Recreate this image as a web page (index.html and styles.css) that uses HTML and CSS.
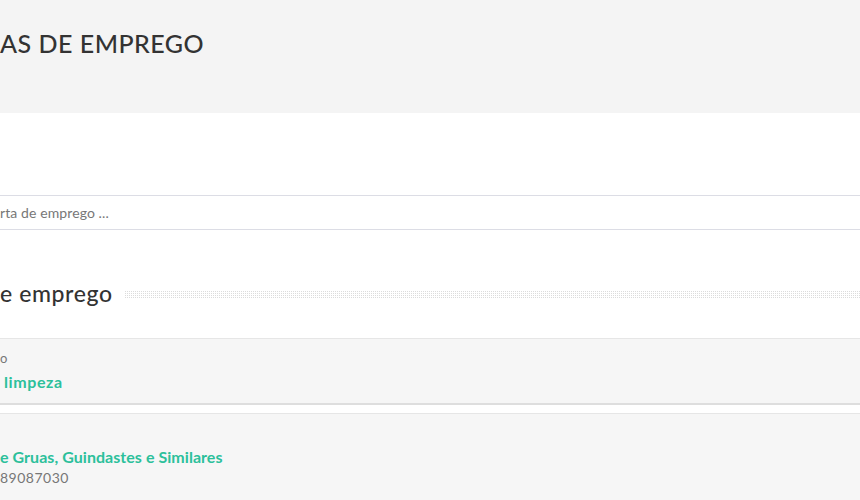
FILE: index.html
```html
<!DOCTYPE html>
<html lang="pt">
<head>
    <meta charset="UTF-8">
    <title>Ofertas de emprego</title>
    <link rel="stylesheet" href="styles.css">
</head>
<body>
<header class="page-head">
    <h1>AS DE EMPREGO</h1>
</header>
<div class="content">
    <form class="search">
        <input type="text" placeholder="rta de emprego ...">
    </form>
    <h2 class="section-title"><span>e emprego</span><i class="dots"></i></h2>
    <ul class="jobs">
        <li class="job">
            <span class="meta">o</span>
            <a href="#" class="job-title job-indent">limpeza</a>
        </li>
        <li class="job job-tall">
            <a href="#" class="job-title">e Gruas, Guindastes e Similares</a>
            <span class="meta">89087030</span>
        </li>
    </ul>
</div>
</body>
</html>
```

FILE: styles.css
```css
html, body {
    margin: 0;
    padding: 0;
    overflow: hidden;
}
body {
    font-family: Lato, "Open Sans", sans-serif;
    background: #fff;
    color: #333;
}
.page-head {
    background: #f4f4f4;
    height: 113px;
    padding-top: 28px;
    box-sizing: border-box;
}
.page-head h1 {
    margin: 0;
    font-size: 25px;
    font-weight: 500;
    letter-spacing: 0.5px;
    color: #333;
}
.content {
    padding-top: 82px;
}
.search input {
    display: block;
    width: 100%;
    box-sizing: border-box;
    height: 35px;
    border: 0;
    border-top: 1px solid #dcdde5;
    border-bottom: 1px solid #dcdde5;
    padding: 0;
    font-family: Lato, sans-serif;
    font-size: 14px;
    letter-spacing: 0.1px;
    color: #777;
    outline: none;
}
.search input::placeholder {
    color: #777;
}
.section-title {
    display: flex;
    align-items: center;
    margin: 51px 0 0;
    height: 24px;
    font-size: 23px;
    font-weight: 500;
    letter-spacing: 0.6px;
    color: #333;
}
.section-title .dots {
    flex: 1;
    height: 9px;
    margin-left: 11px;
    margin-top: 2px;
    background:
        linear-gradient(90deg, #fff 1px, transparent 1px) 0 0 / 2px 2px,
        linear-gradient(#fff 1px, #dcdcdc 1px) 0 0 / 2px 2px;
}
.jobs {
    list-style: none;
    margin: 33px 0 0;
    padding: 0;
}
.job {
    display: flex;
    flex-direction: column;
    background: #f6f6f6;
    border-top: 1px solid #e6e6e6;
    border-bottom: 2px solid #dedede;
    height: 67px;
    box-sizing: border-box;
    padding-top: 11px;
    margin-bottom: 8px;
}
.job .meta {
    font-size: 13px;
    color: #777;
    line-height: 16px;
}
.job-title {
    font-size: 16px;
    font-weight: 700;
    letter-spacing: 0.6px;
    color: #2cc09b;
    text-decoration: none;
    line-height: 20px;
    margin-top: 6px;
}
.job-indent {
    padding-left: 4px;
}
.job-tall {
    height: 120px;
    padding-top: 27px;
}
.job-tall .job-title {
    letter-spacing: 0.05px;
}
.job-tall .meta {
    margin-top: 3px;
    font-size: 14px;
    letter-spacing: 0.5px;
}
```
